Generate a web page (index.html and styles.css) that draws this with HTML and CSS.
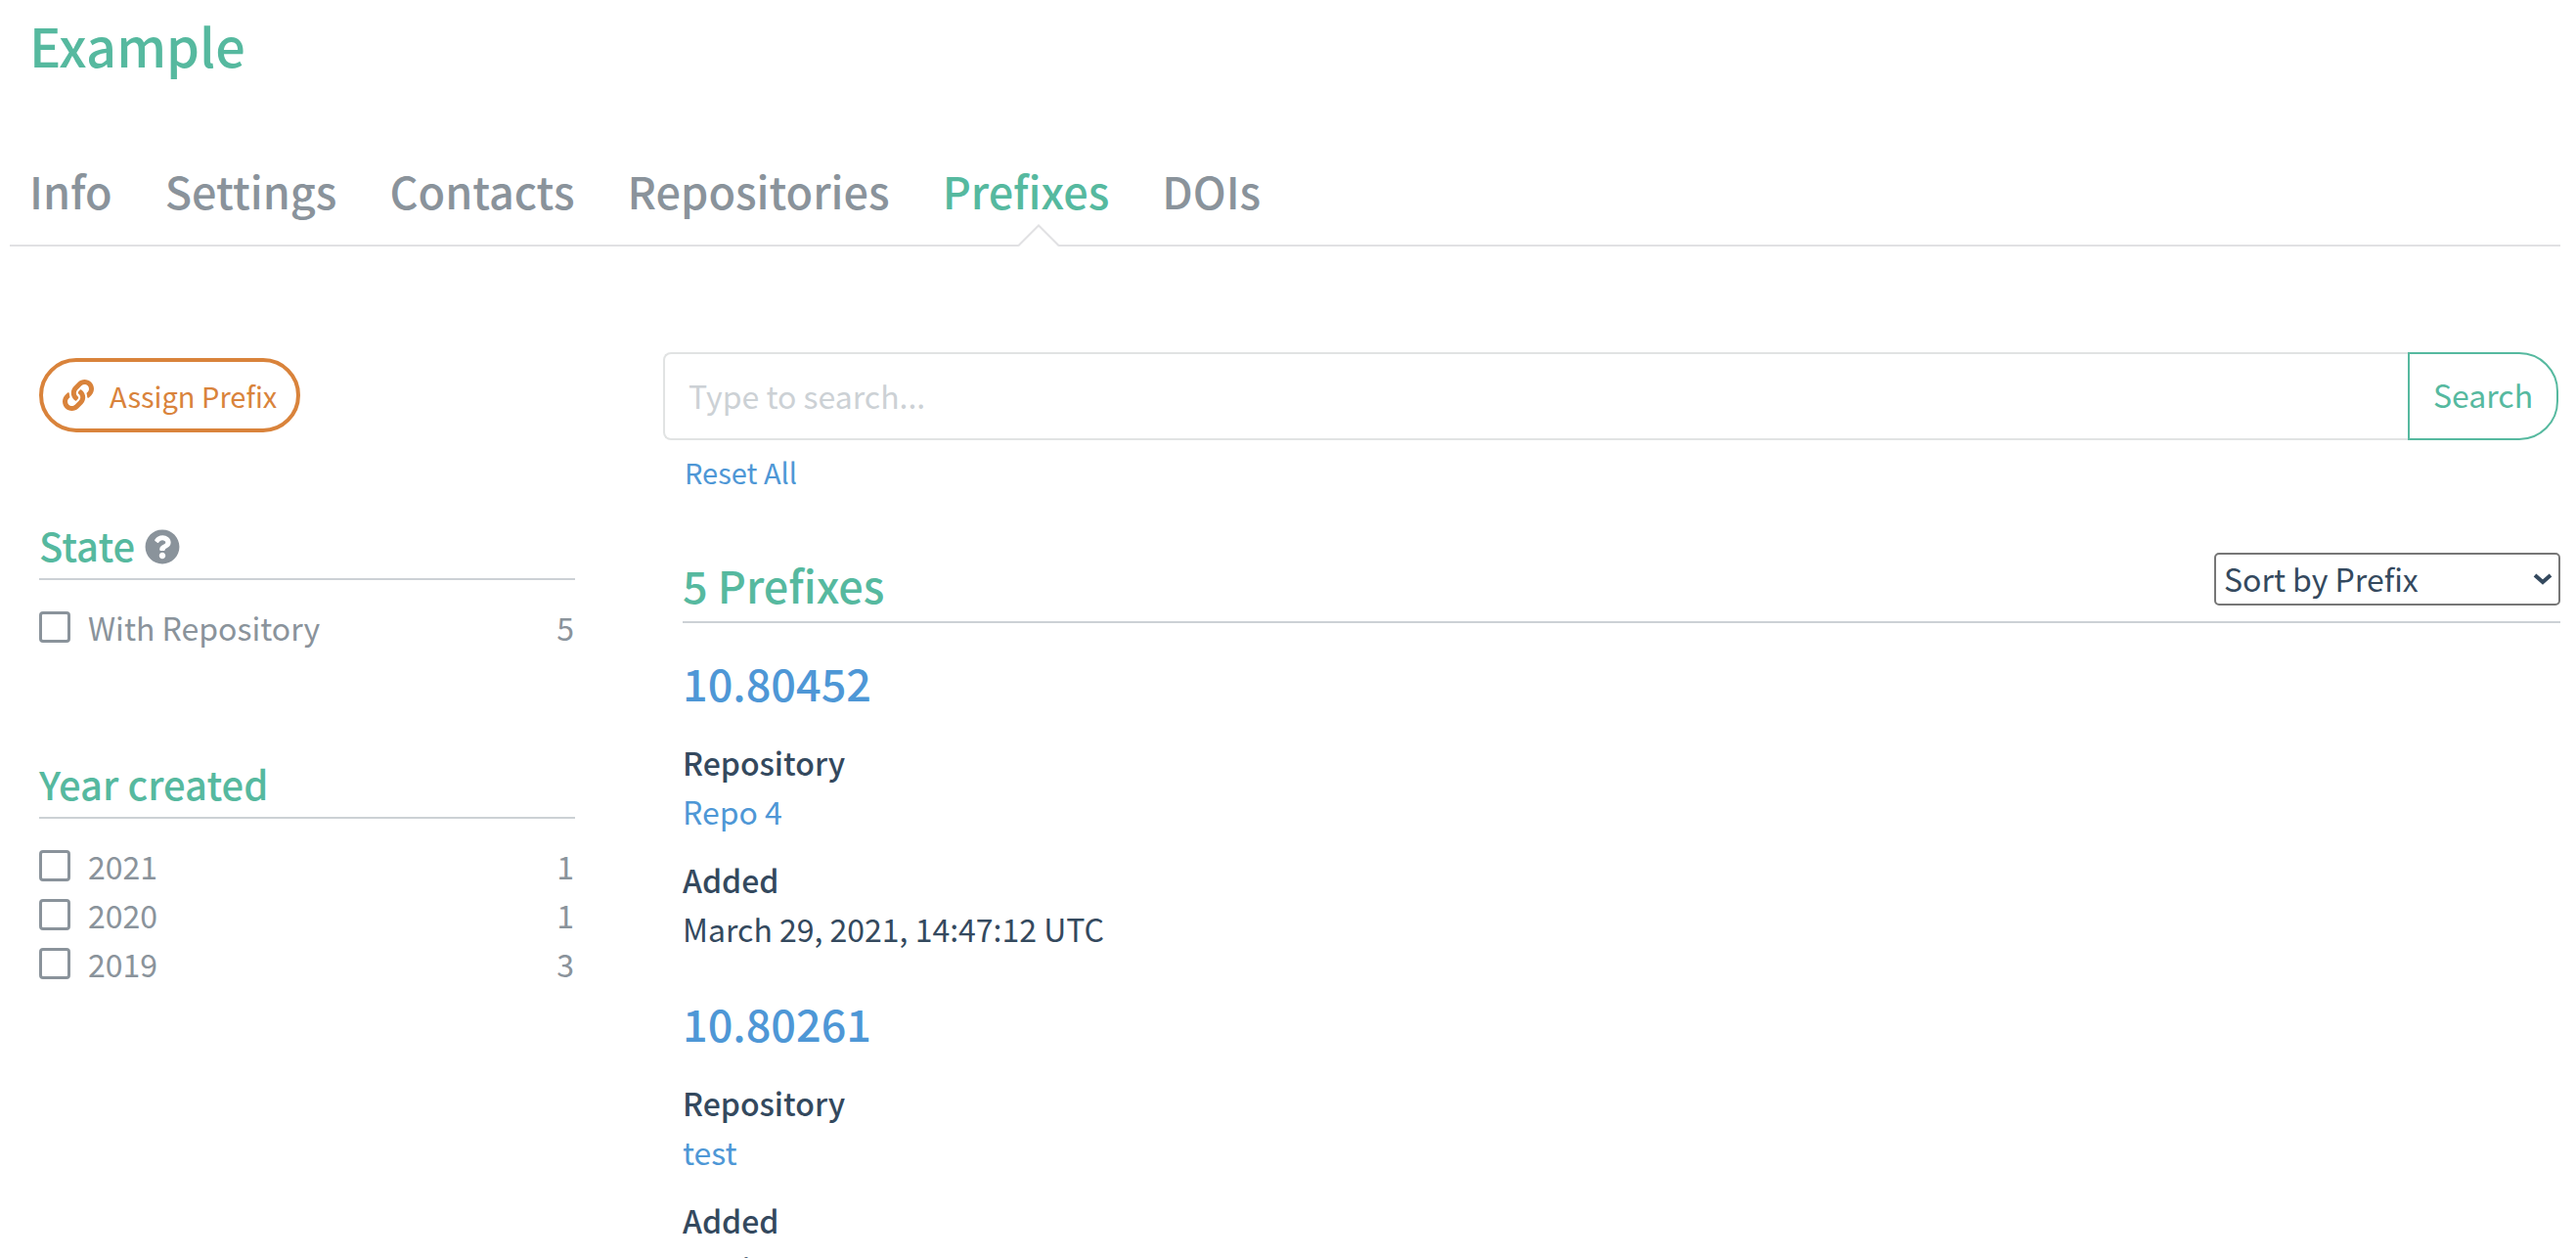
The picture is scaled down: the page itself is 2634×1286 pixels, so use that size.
FILE: index.html
```html
<!DOCTYPE html>
<html lang="en">
<head>
  <meta charset="UTF-8" />
  <meta name="viewport" content="width=device-width, initial-scale=1.0"/>
  <title>Example - Prefixes</title>
  <link rel="stylesheet" href="styles.css">
</head>
<body>
  <header class="page-header">
    <h1>Example</h1>
  </header>

  <nav class="tabs">
    <ul>
      <li><a href="#info">Info</a></li>
      <li><a href="#settings">Settings</a></li>
      <li><a href="#contacts">Contacts</a></li>
      <li><a href="#repositories">Repositories</a></li>
      <li class="active">
        <a href="#prefixes">Prefixes</a>
        <svg class="notch" viewBox="0 0 42 24" aria-hidden="true">
          <path d="M0 24V21.5L21 1L42 21.5V24z" fill="#fff"/>
          <path d="M0 22.5L21 1.5L42 22.5" fill="none" stroke="#e1e1e3" stroke-width="2"/>
        </svg>
      </li>
      <li><a href="#dois">DOIs</a></li>
    </ul>
  </nav>

  <div class="layout">
    <aside class="sidebar">
      <button type="button" class="btn-assign">
        <svg class="icon-link" viewBox="0 0 512 512" aria-hidden="true">
          <path fill="currentColor" d="M326.612 185.391c59.747 59.809 58.927 155.698.36 214.59-.11.12-.24.25-.36.37l-67.2 67.2c-59.27 59.27-155.699 59.262-214.96 0-59.27-59.26-59.27-155.7 0-214.96l37.106-37.106c9.84-9.84 26.786-3.3 27.294 10.606.648 17.722 3.826 35.527 9.69 52.721 1.986 5.822.567 12.262-3.783 16.612l-13.087 13.087c-28.026 28.026-28.905 73.66-1.155 101.96 28.024 28.579 74.086 28.749 102.325.51l67.2-67.19c28.191-28.191 28.073-73.757 0-101.83-3.701-3.694-7.429-6.564-10.341-8.569a16.037 16.037 0 0 1-6.947-12.606c-.396-10.567 3.348-21.456 11.698-29.806l21.054-21.055c5.521-5.521 14.182-6.199 20.584-1.731a152.482 152.482 0 0 1 20.522 17.197zM467.547 44.449c-59.261-59.262-155.69-59.27-214.96 0l-67.2 67.2c-.12.12-.25.25-.36.37-58.566 58.892-59.387 154.781.36 214.59a152.454 152.454 0 0 0 20.521 17.196c6.402 4.468 15.064 3.789 20.584-1.731l21.054-21.055c8.35-8.35 12.094-19.239 11.698-29.806a16.037 16.037 0 0 0-6.947-12.606c-2.912-2.005-6.64-4.875-10.341-8.569-28.073-28.073-28.191-73.639 0-101.83l67.2-67.19c28.239-28.239 74.3-28.069 102.325.51 27.75 28.3 26.872 73.934-1.155 101.96l-13.087 13.087c-4.35 4.35-5.769 10.79-3.783 16.612 5.864 17.194 9.042 34.999 9.69 52.721.509 13.906 17.454 20.446 27.294 10.606l37.106-37.106c59.271-59.259 59.271-155.699.001-214.959z"/>
        </svg>
        Assign Prefix
      </button>

      <section class="facet">
        <h4>
          State
          <svg class="icon-help" viewBox="0 0 512 512" aria-hidden="true">
            <path fill="currentColor" d="M504 256c0 136.997-111.043 248-248 248S8 392.997 8 256C8 119.083 119.043 8 256 8s248 111.083 248 248zM262.655 90c-54.497 0-89.255 22.957-116.549 63.758-3.536 5.286-2.353 12.415 2.715 16.258l34.699 26.31c5.205 3.947 12.621 3.008 16.665-2.122 17.864-22.658 30.113-35.797 57.303-35.797 20.429 0 45.698 13.148 45.698 32.958 0 14.976-12.363 22.667-32.534 33.976C247.128 238.528 216 254.941 216 296v4c0 6.627 5.373 12 12 12h56c6.627 0 12-5.373 12-12v-1.333c0-28.462 83.186-29.647 83.186-106.667 0-58.002-60.165-102-116.531-102zM256 338c-25.365 0-46 20.635-46 46 0 25.364 20.635 46 46 46s46-20.636 46-46c0-25.365-20.635-46-46-46z"/>
          </svg>
        </h4>
        <ul>
          <li><label><input type="checkbox"> With Repository</label><span>5</span></li>
        </ul>
      </section>

      <section class="facet">
        <h4>Year created</h4>
        <ul>
          <li><label><input type="checkbox"> 2021</label><span>1</span></li>
          <li><label><input type="checkbox"> 2020</label><span>1</span></li>
          <li><label><input type="checkbox"> 2019</label><span>3</span></li>
        </ul>
      </section>
    </aside>

    <main class="content">
      <form class="search">
        <input type="text" placeholder="Type to search..." aria-label="Search prefixes">
        <button type="button">Search</button>
      </form>
      <a class="reset" href="#reset">Reset All</a>

      <div class="results">
        <div class="results-header">
          <h3>5 Prefixes</h3>
          <div class="sort">
            <select aria-label="Sort">
              <option>Sort by Prefix</option>
              <option>Sort by Date</option>
            </select>
            <svg class="icon-arrow" viewBox="0 0 20 14" aria-hidden="true">
              <path d="M2 3L10 10L18 3" fill="none" stroke="#34495e" stroke-width="4"/>
            </svg>
          </div>
        </div>

        <article class="prefix">
          <h3><a href="#10.80452">10.80452</a></h3>
          <h5>Repository</h5>
          <p><a href="#repo-4">Repo 4</a></p>
          <h5>Added</h5>
          <p>March 29, 2021, 14:47:12 UTC</p>
        </article>

        <article class="prefix">
          <h3><a href="#10.80261">10.80261</a></h3>
          <h5>Repository</h5>
          <p><a href="#test">test</a></p>
          <h5>Added</h5>
          <p>April 7, 2020, 10:00:00 UTC</p>
        </article>
      </div>
    </main>
  </div>
</body>
</html>
```
FILE: styles.css
```css
*,
*::before,
*::after {
  margin: 0;
  padding: 0;
  box-sizing: border-box;
}

html {
  overflow: hidden;
}

body {
  height: 100vh;
  overflow: hidden;
  padding: 0 16px 0 10px;
  background-color: #fff;
  color: #34495e;
  font-family: "Noto Sans CJK SC", "Open Sans", sans-serif;
  font-size: 32px;
  line-height: 50px;
}

h1,
h3,
h4,
h5 {
  font-weight: 500;
}

h1,
h3,
h4 {
  color: #56b99f;
}

a {
  color: #4e97d6;
  text-decoration: none;
}

ul {
  list-style: none;
}

input,
button,
select {
  font: inherit;
}

.page-header {
  padding: 6px 20px 0;
}

.page-header h1 {
  font-size: 54px;
  line-height: 80px;
}

.tabs {
  margin-top: 74px;
  padding: 0 20px;
  border-bottom: 2px solid #e1e1e3;
}

.tabs ul {
  display: flex;
  gap: 54px;
}

.tabs li {
  position: relative;
  height: 90px;
}

.tabs a {
  color: #8a939b;
  font-size: 45px;
  font-weight: 500;
  line-height: 70px;
}

.tabs .active a {
  color: #56b99f;
}

.notch {
  position: absolute;
  left: 50%;
  bottom: -3px;
  width: 42px;
  height: 24px;
  margin-left: -8px;
}

.layout {
  display: flex;
  padding-top: 108px;
}

.sidebar {
  width: 548px;
  margin: 6px 90px 0 30px;
  flex: none;
  color: #8a939b;
}

.btn-assign {
  display: flex;
  align-items: center;
  gap: 16px;
  height: 76px;
  padding: 0 20px;
  border: 4px solid #d9833b;
  border-radius: 38px;
  background: #fff;
  color: #d9833b;
  font-size: 29px;
}

.icon-link {
  width: 32px;
  height: 32px;
}

.facet {
  margin-top: 88px;
}

.facet + .facet {
  margin-top: 108px;
}

.facet h4 {
  display: flex;
  align-items: center;
  gap: 10px;
  height: 63px;
  padding-bottom: 8px;
  border-bottom: 2px solid #ccd1d5;
  font-size: 40px;
}

.icon-help {
  width: 36px;
  height: 36px;
  margin-top: 4px;
  color: #8a939b;
}

.facet ul {
  margin-top: 23px;
  padding-right: 1px;
}

.facet li {
  display: flex;
  justify-content: space-between;
}

.facet label {
  display: flex;
  align-items: center;
  gap: 18px;
}

.facet input {
  appearance: none;
  width: 32px;
  height: 32px;
  border: 3px solid #8a939b;
  border-radius: 4px;
}

.content {
  flex: 1;
}

.search {
  display: flex;
  height: 90px;
}

.search input {
  flex: 1;
  padding: 0 24px 2px;
  border: 2px solid #e1e3e3;
  border-right: none;
  border-radius: 8px 0 0 8px;
  color: #34495e;
}

.search input::placeholder {
  color: #ccd1d5;
}

.search button {
  width: 154px;
  margin-right: 2px;
  padding-bottom: 4px;
  border: 2px solid #56b99f;
  border-radius: 0 40px 40px 0;
  background: #fff;
  color: #56b99f;
}

.reset {
  display: inline-block;
  margin: 7px 0 0 22px;
  font-size: 29px;
}

.results {
  padding-left: 20px;
}

.results-header {
  display: flex;
  justify-content: space-between;
  margin-top: 58px;
  border-bottom: 2px solid #ccd1d5;
}

.results-header h3 {
  font-size: 45px;
  line-height: 66px;
  padding-bottom: 4px;
}

.sort {
  position: relative;
}

.sort select {
  appearance: none;
  width: 354px;
  height: 54px;
  padding: 0 0 2px 8px;
  border: 2px solid #767676;
  border-radius: 5px;
  background: #fff;
  color: #34495e;
  line-height: 48px;
}

.icon-arrow {
  position: absolute;
  top: 20px;
  right: 8px;
  width: 20px;
  height: 14px;
}

.prefix {
  padding: 25px 0 11px;
}

.prefix h3 {
  font-size: 45px;
  line-height: 72px;
}

.prefix h5 {
  margin-top: 20px;
  font-size: 32px;
}
```
